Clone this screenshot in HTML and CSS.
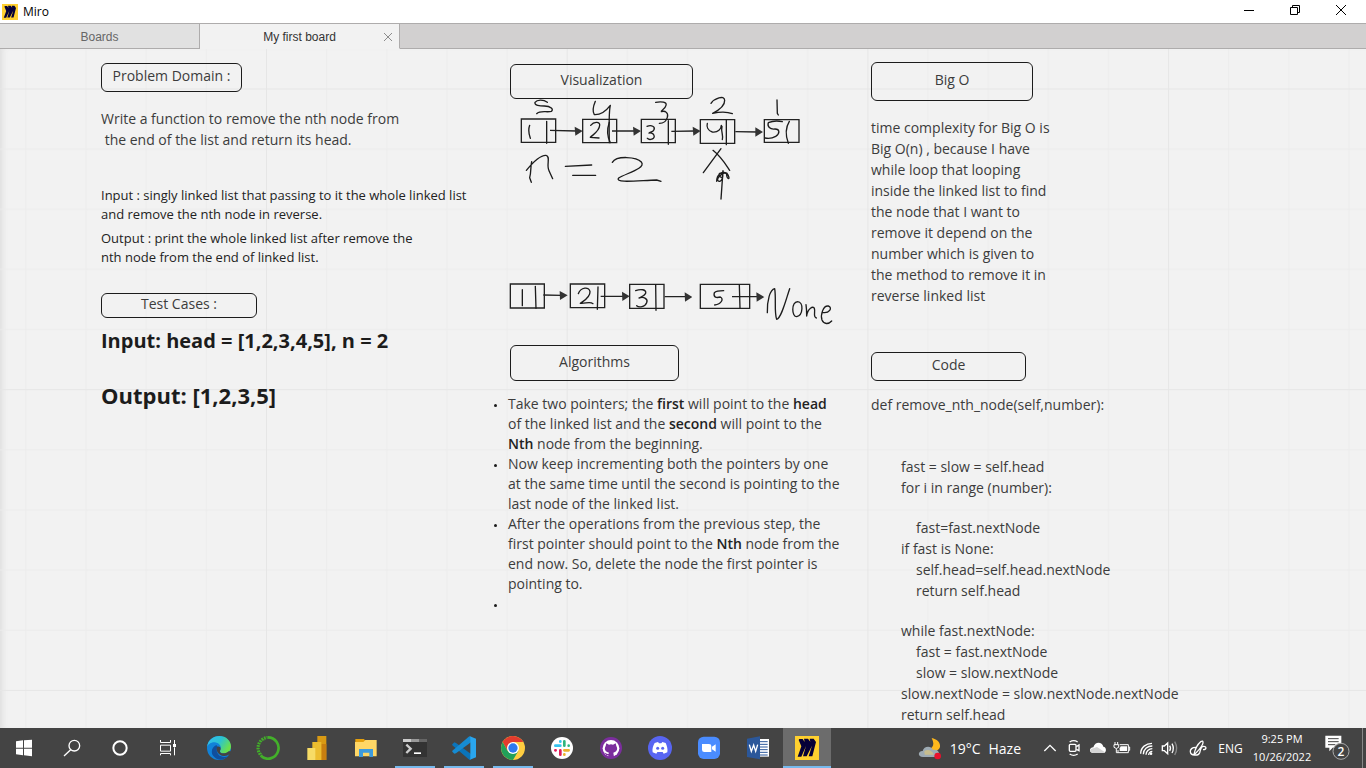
FILE: index.html
```html
<!DOCTYPE html>
<html lang="en">
<head>
<meta charset="utf-8">
<title>Miro</title>
<link rel="stylesheet" href="styles.css">
</head>
<body>
<header class="titlebar">
  <svg class="app-logo" viewBox="345 36 72 72" aria-hidden="true"><use href="#miro-mark"/></svg>
  <span class="app-name">Miro</span>
  <button class="win-btn" aria-label="Minimize"><svg width="10" height="10" viewBox="0 0 10 10"><path d="M0 5.5H10" stroke="#000"/></svg></button>
  <button class="win-btn" aria-label="Restore"><svg width="10" height="10" viewBox="0 0 10 10"><path d="M.5 2.5h7v7h-7zM2.500 2.500v-2h7v7h-2" fill="none" stroke="#000"/></svg></button>
  <button class="win-btn" aria-label="Close window"><svg width="10" height="10" viewBox="0 0 10 10"><path d="M0 0L10 10M10 0L0 10" stroke="#000"/></svg></button>
</header>

<nav class="tabs">
  <button class="tab">Boards</button>
  <div class="tab tab-active">
    <button class="tab-title">My first board</button>
    <button class="tab-close" aria-label="Close tab"><svg width="8" height="8" viewBox="0 0 8 8"><path d="M0 0L8 8M8 0L0 8" stroke="#8c8c8c"/></svg></button>
  </div>
</nav>

<main class="board">
  <svg class="grid" aria-hidden="true">
    <defs>
      <pattern id="cells" width="300.7" height="300.7" patternUnits="userSpaceOnUse" x="266" y="39.500">
        <path d="M60.6 0V301M120.8 0V301M180.900 0V301M241 0V301M0 60.600H301M0 120.800H301M0 180.900H301M0 241H301" stroke="#ececec" fill="none"/>
        <path d="M.5 0V301M0 .5H301" stroke="#e6e6e6" fill="none"/>
      </pattern>
    </defs>
    <rect width="100%" height="100%" fill="url(#cells)"/>
  </svg>

  <div class="columns">
    <section class="col col-problem">
      <h2 class="label label-problem">Problem Domain :</h2>
      <p class="text problem-text">Write a function to remove the nth node from<br>&nbsp;the end of the list and return its head.</p>
      <p class="note note-input">Input : singly linked list that passing to it the whole linked list<br>and remove the nth node in reverse.</p>
      <p class="note">Output : print the whole linked list after remove the<br>nth node from the end of linked list.</p>
      <h2 class="label label-tests">Test Cases :</h2>
      <p class="case case-input">Input: head = [1,2,3,4,5], n = 2</p>
      <p class="case case-output">Output: [1,2,3,5]</p>
    </section>

    <section class="col col-visual">
      <h2 class="label label-visual">Visualization</h2>
      <svg class="sketch" width="368" height="102" viewBox="36 147 1104 306" role="img" aria-label="Linked list of five nodes with n = 2">
        <g fill="none" stroke="#222" stroke-width="4">
          <path d="M124 207H227V277H124ZM308 208H410V278H308ZM484 208H586V278H484ZM661 209H764V280H661ZM853 209H957V277H853Z"/>
          <path d="M210 241L290 243M396 243H466M574 244L644 243M766 245L832 246"/>
        </g>
        <path d="M284 230L308 243L286 257ZM459 230L483 243L461 257ZM638 230L662 243L640 257ZM826 232L849 246L826 260Z" fill="#333"/>
        <g fill="none" stroke="#1c1c1c" stroke-width="4" stroke-linecap="round" stroke-linejoin="round">
          <path d="M202 157C190 148 171 149 165 157C162 166 180 168 193 168C213 168 222 179 214 184C201 188 181 180 170 191"/>
          <path d="M346 154C340 168 336 183 343 194C361 195 378 183 391 166M391 166C386 185 387 210 388 278"/>
          <path d="M527 157C544 154 562 156 558 166C555 179 542 181 544 185C556 181 566 189 562 202C558 217 546 220 538 220"/>
          <path d="M693 160C703 145 733 134 734 151C735 170 710 184 698 190C721 185 744 186 757 191"/>
          <path d="M891 150L892 190L895 195M149 226C144 240 147 254 151 265M200 214V280"/>
          <path d="M332 226C343 213 361 216 359 226C358 244 340 253 331 262L357 264M388 217C381 237 382 261 391 278"/>
          <path d="M501 229C515 224 526 230 522 239C519 246 511 246 507 249C523 247 528 264 516 267C510 270 505 268 502 265M565 212V283"/>
          <path d="M682 220C679 231 684 242 697 246C714 248 724 237 724 226M726 229C722 245 731 256 727 269M739 211V284"/>
          <path d="M907 215C889 211 872 215 865 218C861 229 870 239 885 237C899 237 901 250 887 259C877 265 865 266 855 264M928 214C915 235 918 261 925 280"/>
          <path d="M155 335C151 353 154 366 149 383L154 397M139 361C157 339 181 315 198 316C213 319 198 345 207 362L218 386M256 349L335 345M278 376H347M397 337C409 316 470 320 484 336C500 355 435 371 416 384C404 400 470 392 530 390L543 394"/>
          <path d="M723 296L670 368M699 301C723 320 735 340 749 361M723 447L729 362M710 394C710 372 727 363 740 369C756 391 739 391 740 372C732 363 711 383 713 391C724 403 733 375 725 370C714 366 716 379 724 382"/>
        </g>
      </svg>
      <svg class="sketch sketch-result" width="368" height="50" viewBox="36 30 1104 150" role="img" aria-label="Resulting list 1, 2, 3, 5, None">
        <g fill="none" stroke="#222" stroke-width="4">
          <path d="M91 42H193V114H91ZM271 42H374V113H271ZM449 43H552V115H449ZM661 43H809V115H661Z"/>
          <path d="M190 75L244 76M362 79H433M554 80H620M756 80H835"/>
        </g>
        <path d="M239 63L263 76L240 90ZM426 65L449 79L427 93ZM614 67L637 81L615 95ZM829 67L853 81L830 95Z" fill="#333"/>
        <g fill="none" stroke="#1c1c1c" stroke-width="4" stroke-linecap="round" stroke-linejoin="round">
          <path d="M127 59V107M166 49L168 115M295 71C302 52 328 48 330 65C331 82 312 92 301 100C315 102 329 93 339 101M354 51L352 118"/>
          <path d="M467 62C482 56 500 58 497 70C493 79 481 82 477 84C492 79 505 87 500 98C495 111 477 114 470 107M527 44L528 121"/>
          <path d="M731 62C718 62 708 63 703 68C699 83 710 84 721 81C732 86 725 102 704 105M778 44L780 114"/>
          <path d="M862 128C861 91 870 59 884 56C889 84 882 127 890 148C904 144 916 95 929 56"/>
          <path d="M953 95C933 98 935 140 950 140C970 135 971 96 953 95M978 104C980 118 980 130 980 138C983 114 1000 107 1003 115C1007 127 998 140 1009 144"/>
          <path d="M1027 127C1048 131 1059 113 1045 108C1029 106 1021 135 1026 150C1032 164 1046 163 1055 153"/>
        </g>
      </svg>
      <h2 class="label label-algo">Algorithms</h2>
      <ul class="steps">
        <li>Take two pointers; the <b>first</b> will point to the <b>head</b> of the linked list and the <b>second</b> will point to the <b>Nth</b> node from the beginning.</li>
        <li>Now keep incrementing both the pointers by one at the same time until the second is pointing to the last node of the linked list.</li>
        <li>After the operations from the previous step, the first pointer should point to the <b>Nth</b> node from the end now. So, delete the node the first pointer is pointing to.</li>
        <li></li>
      </ul>
    </section>

    <section class="col col-code">
      <h2 class="label label-bigo">Big O</h2>
      <p class="text bigo-text">time complexity for Big O is<br>Big O(n) , because I have<br>while loop that looping<br>inside the linked list to find<br>the node that I want to<br>remove it depend on the<br>number which is given to<br>the method to remove it in<br>reverse linked list</p>
      <h2 class="label label-code">Code</h2>
      <div class="text code">
        <p class="def">def remove_nth_node(self,number):</p>
        <div class="body">
          <p>fast = slow = self.head<br>for i in range (number):</p>
          <div>
            <p class="inner">fast=fast.nextNode</p>
            <p>if fast is None:</p>
            <p class="inner">self.head=self.head.nextNode<br>return self.head</p>
          </div>
          <div>
            <p>while fast.nextNode:</p>
            <p class="inner">fast = fast.nextNode<br>slow = slow.nextNode</p>
            <p>slow.nextNode = slow.nextNode.nextNode<br>return self.head</p>
          </div>
        </div>
      </div>
    </section>
  </div>
</main>

<footer class="taskbar">
  <div class="system">
    <button class="task" aria-label="Start"><svg width="24" height="24" viewBox="36 36 72 72"><path d="M48 52L69 49V71H48ZM72 49L96 47V71H72ZM48 74H69V94L48 91ZM72 74H96V97L72 94Z" fill="#fff"/></svg></button>
    <button class="task" aria-label="Search"><svg width="24" height="24" viewBox="180 36 72 72" fill="none" stroke="#fff" stroke-width="4"><circle cx="223" cy="65" r="16"/><path d="M212 77L192 96"/></svg></button>
    <button class="task" aria-label="Cortana"><svg width="24" height="24" viewBox="324 36 72 72"><circle cx="360" cy="72" r="20" fill="none" stroke="#fff" stroke-width="6"/></svg></button>
    <button class="task" aria-label="Task View"><svg width="24" height="24" viewBox="468 36 72 72" fill="none" stroke="#fff" stroke-width="3"><path d="M481.500 48V55.500H511.500V48M481.500 63.500H511.500V81.500H481.500ZM481.500 94V88.500H511.500V94M523.500 48V60M523.500 70V94"/><path d="M519 60h9v9h-9z" fill="#fff" stroke="none"/></svg></button>
  </div>
  <div class="apps">
    <button class="task" aria-label="Edge"><svg width="24" height="24" viewBox="621 36 72 72">
      <defs><linearGradient id="eg" x1="0" y1="0" x2="1" y2=".5"><stop offset="0" stop-color="#35bdf1"/><stop offset=".55" stop-color="#2bc3d2"/><stop offset="1" stop-color="#6be04b"/></linearGradient></defs>
      <circle cx="657" cy="72" r="36" fill="#1182d8"/>
      <path d="M621 69C624 48 639 36 658 36C679 36 693 51 693 67C693 81 684 88 672 88C661 88 658 83 661 78C666 69 659 57 645 55C633 54 624 61 621 69Z" fill="url(#eg)"/>
      <path d="M649 63C636 69 631 84 640 96C650 109 670 112 684 96C679 99 671 100 663 97C652 93 646 78 653 68Z" fill="#104f9e"/>
      <path d="M652 68C646 76 653 91 666 95C678 98 686 93 688 91L697 95L697 82L686 82C681 87 674 88 669 88C661 88 658 83 661 78C664 71 659 66 652 68Z" fill="#444"/>
    </svg></button>
    <button class="task" aria-label="Anaconda"><svg width="24" height="24" viewBox="768 36 72 72" fill="none" stroke="#43b02a"><path d="M804 40A32 32 0 1 1 785 98" stroke-width="8"/><path d="M786 97A32 32 0 0 1 803 40" stroke-width="9" stroke-dasharray="5 3"/><path d="M784 90A27 27 0 0 1 798 45" stroke-width="4" stroke-dasharray="3 5"/></svg></button>
    <button class="task" aria-label="Power BI"><svg width="24" height="24" viewBox="914 36 72 72"><path d="M951 36H978V108H951Z" fill="#d99a13"/><path d="M963 60H978V108H963Z" fill="#c87f10"/><path d="M936 54H963V108H936Z" fill="#ecbd2f"/><path d="M921 72H945V108H921Z" fill="#f7dc66"/></svg></button>
    <button class="task" aria-label="File Explorer"><svg width="24" height="24" viewBox="42 36 72 72"><path d="M46 45H72L77 52H108V62H46Z" fill="#e5a00d"/><path d="M45 54H70L76 48H110V97H45Z" fill="#ffd766"/><path d="M57 99V75H99V99H88V86H69V99Z" fill="#3e9bdc"/></svg></button>
    <button class="task task-open" aria-label="Terminal"><svg width="24" height="24" viewBox="189 36 72 72"><path d="M189 45H261V99H189Z" fill="#333"/><path d="M189 45H213V54H189Z" fill="#ccc"/><path d="M213 45H237V54H213Z" fill="#999"/><path d="M237 45H261V54H237Z" fill="#666"/><path d="M199 62L212 74L199 87" fill="none" stroke="#ccc" stroke-width="7"/><path d="M222 85H243V90H222Z" fill="#fff"/></svg></button>
    <button class="task task-open" aria-label="Visual Studio Code"><svg width="24" height="24" viewBox="336 36 72 72"><path d="M337 61L343 55L348 57L394 91V105L388 107L337 64Z" fill="#0b74ba"/><path d="M337 83L343 89L348 88L394 54V40L388 37L337 80Z" fill="#168bd2"/><path d="M388 36L408 44V100L388 108C391 106 391 103 391 98V46C391 41 391 38 388 36Z" fill="#2aa6ee"/></svg></button>
    <button class="task task-open" aria-label="Chrome"><svg width="24" height="24" viewBox="483 36 72 72"><circle cx="519" cy="72" r="36" fill="#ffcd40"/><path d="M488 54A36 36 0 0 1 550 54H519L503 81Z" fill="#e33b2e"/><path d="M488 54A36 36 0 0 0 519 108L535 81L519 88L503 81Z" fill="#22a05a"/><circle cx="519" cy="72" r="18" fill="#fff"/><circle cx="519" cy="72" r="14" fill="#2e79ee"/></svg></button>
    <button class="task" aria-label="Slack"><svg width="24" height="24" viewBox="630 36 72 72"><circle cx="666" cy="72" r="33" fill="#fff"/><g fill="none" stroke-width="8" stroke-linecap="round"><path d="M661 52V53M646 65H661" stroke="#36c5f0"/><path d="M673 52V65M686 65H686" stroke="#2eb67d"/><path d="M673 79H686M673 91V92" stroke="#ecb22e"/><path d="M661 79V92M646 79H647" stroke="#e01e5a"/></g></svg></button>
    <button class="task" aria-label="GitHub Desktop"><svg width="24" height="24" viewBox="777 36 72 72"><circle cx="813" cy="72" r="33" fill="#7b2e9d"/><circle cx="813" cy="73" r="25" fill="#fff"/><path d="M799 58L807 62Q813 60 819 62L827 58L829 66C835 76 829 84 820 86L822 99H805V94C797 95 797 89 793 86C799 85 800 92 806 89L807 86C797 84 791 76 797 66Z" fill="#7b2e9d"/></svg></button>
    <button class="task" aria-label="Discord"><svg width="24" height="24" viewBox="924 36 72 72"><circle cx="960" cy="72" r="36" fill="#5865f2"/><path d="M944 57L954 54L957 58H964L967 54L977 57C981 66 984 76 982 85L971 89L968 84H952L949 89L938 85C936 74 939 66 944 57Z" fill="#fff"/><circle cx="953" cy="73" r="4.500" fill="#5865f2"/><circle cx="968" cy="73" r="4.500" fill="#5865f2"/></svg></button>
    <button class="task" aria-label="Zoom"><svg width="24" height="24" viewBox="51 36 72 72"><rect x="54" y="38" width="66" height="67" rx="17" fill="#4a8cff"/><path d="M66 60H87Q94 60 94 66V84H73Q66 84 66 77ZM96 68L107 61V83L96 76Z" fill="#fff"/></svg></button>
    <button class="task" aria-label="Word"><svg width="24" height="24" viewBox="198 36 72 72"><path d="M237 45H267V98H237Z" fill="#fff"/><path d="M240 53H263M240 61H263M240 69H263M240 77H263M240 85H263M240 93H263" stroke="#2b579a" stroke-width="3"/><path d="M201 44L240 37V106L201 99Z" fill="#2b579a"/><path d="M208 62L214 82L221 63L227 82L233 62" fill="none" stroke="#fff" stroke-width="4"/></svg></button>
    <button class="task task-current" aria-label="Miro"><svg width="24" height="24" viewBox="345 36 72 72"><g id="miro-mark"><path d="M345 36H417V108H345Z" fill="#ffd02f"/><path d="M356 48L358 45H368L374 54L372 44H384L391 53L389 44H401L408 54L397 97H386L396 65L380 97H369L378 66L364 98H353L364 67Z" fill="#050038"/></g></svg></button>
  </div>

  <div class="tray">
    <button class="weather"><svg width="24" height="24" viewBox="57 38 72 72"><path d="M98 44C111 70 96 77 82 78C91 90 119 86 123 71C125 57 113 47 98 44Z" fill="#ffb81c"/><path d="M72 101C54 101 57 82 71 83C74 68 96 65 102 80C119 75 127 94 113 101Z" fill="#9eabb4"/><path d="M76 83Q94 74 105 94H77Z" fill="#c7bd8f"/><circle cx="116" cy="98" r="10" fill="#e8112d"/></svg><span>19°C</span><span>Haze</span></button>
    <button class="tray-btn" aria-label="Show hidden icons"><svg width="24" height="24" viewBox="411 36 72 72"><path d="M430 81L447 64L464 81" fill="none" stroke="#fff" stroke-width="4"/></svg></button>
    <button class="tray-btn" aria-label="Meet Now"><svg width="24" height="24" viewBox="484 36 72 72" fill="none" stroke="#fff" stroke-width="4"><rect x="506" y="61" width="20" height="21" rx="3"/><path d="M527 68L535 63V80L527 76M507 54Q519 46 531 54M507 90Q519 98 531 90"/></svg></button>
    <button class="tray-btn" aria-label="OneDrive"><svg width="24" height="24" viewBox="555 36 72 72"><path d="M577 87C563 87 564 70 577 70C583 50 604 54 607 68C617 69 618 86 607 87Z" fill="#fff"/><path d="M570 75L588 69L612 85Q610 88 606 87H577Q568 86 567 81Z" fill="#d4d4d4"/></svg></button>
    <button class="tray-btn" aria-label="Battery"><svg width="24" height="24" viewBox="627 36 72 72" fill="none" stroke="#fff" stroke-width="3"><path d="M656 62H682V86H651V78M682 69H686V79H682M642 54V62M650 54V62M639 62H653V70Q646 77 639 70ZM646 74V86H651"/><path d="M659 67H678V81H656V73Z" fill="#fff" stroke="none"/></svg></button>
    <button class="tray-btn" aria-label="Wi-Fi"><svg width="24" height="24" viewBox="702 36 72 72" fill="none" stroke="#fff" stroke-width="4"><path d="M722 89C722 70 738 58 756 58M730 91C730 76 742 66 757 66M738 92C738 82 746 74 757 74M746 93C746 87 751 82 757 82"/><circle cx="753" cy="89" r="4" fill="#fff" stroke="none"/></svg></button>
    <button class="tray-btn" aria-label="Volume"><svg width="24" height="24" viewBox="771 36 72 72" fill="none" stroke="#fff" stroke-width="4"><path d="M784 66H790L800 57V89L790 80H784ZM806 65Q811 73 806 81M813 59Q821 73 813 87"/><path d="M821 53Q833 73 821 93" stroke="#888"/></svg></button>
    <button class="tray-btn tray-pen" aria-label="Windows Ink"><svg width="24" height="24" viewBox="855 36 72 72" fill="none" stroke="#fff" stroke-width="4"><path d="M879 91C882 77 889 61 899 53Q907 48 906 57C904 68 893 78 883 89ZM886 70C873 69 867 77 868 83C869 96 892 97 896 86C899 77 899 68 907 67C917 66 918 77 906 77"/></svg></button>
    <button class="lang">ENG</button>
    <button class="clock">9:25 PM<br>10/26/2022</button>
    <button class="notice" aria-label="Notifications"><svg width="26" height="26" viewBox="1274 46 78 78"><path d="M1275 48H1323V84H1297L1287 95V84H1275Z" fill="#fff"/><path d="M1283 57H1315M1283 66H1315M1283 75H1305" stroke="#444" stroke-width="3"/><circle cx="1322" cy="95" r="24" fill="#444" stroke="#aaa" stroke-width="3"/></svg><span class="badge">2</span></button>
  </div>
</footer>
</body>
</html>
```
FILE: styles.css
```css
* { box-sizing: border-box; }

body {
  margin: 0;
  height: 100vh;
  display: flex;
  flex-direction: column;
  overflow: hidden;
  background: #f2f2f2;
  color: #3c3c3c;
  font-family: "Open Sans", "Noto Sans", sans-serif;
}

h2, p, ul { margin: 0; padding: 0; font-weight: 400; }

button {
  margin: 0;
  padding: 0;
  border: 0;
  background: none;
  color: inherit;
  font: inherit;
}

svg { display: block; flex: none; }

/* window chrome */
.titlebar {
  flex: none;
  height: 23px;
  display: flex;
  align-items: center;
  padding: 0 2px;
  background: #fff;
  color: #000;
  font-size: 12px;
}
.app-logo { width: 16px; height: 16px; }
.app-name { flex: 1; padding-left: 5px; }
.win-btn {
  width: 46px;
  height: 23px;
  padding-bottom: 3px;
  display: flex;
  align-items: center;
  justify-content: center;
}

.tabs {
  flex: none;
  height: 26px;
  display: flex;
  background: #d2d0d0;
  border-top: 1px solid #aeacac;
  font: 12px "Liberation Sans", Arial, sans-serif;
}
.tab {
  width: 200px;
  display: flex;
  align-items: center;
  justify-content: center;
  padding-top: 2px;
  background: #e1e1e1;
  border-right: 1px solid #aeacac;
  border-bottom: 1px solid #aeacac;
  color: #666;
}
.tabs::after { content: ""; flex: 1; border-bottom: 1px solid #aeacac; }
.tab-active {
  background: #f2f2f2;
  border-bottom-color: #f2f2f2;
  color: #333;
}
.tab-title { flex: 1; padding-left: 20px; }
.tab-close { padding: 4px 7px 4px 5px; }

/* board */
.board {
  flex: 1;
  min-height: 0;
  position: relative;
  overflow: hidden;
  box-shadow: inset 6px 0 6px -4px #dcdcdc;
}
.grid { position: absolute; top: 0; left: 0; width: 100%; height: 100%; }
.columns {
  position: relative;
  display: grid;
  grid-template-columns: 391fr 379fr 495fr;
  padding-left: 101px;
}
.col { min-width: 0; }

.label {
  display: flex;
  align-items: center;
  justify-content: center;
  border: 1px solid #1c1c1c;
  border-radius: 6px;
  font-size: 14px;
  line-height: 20px;
}
.text { font-size: 14px; line-height: 21px; }

.col-problem { padding-top: 14px; }
.label-problem { width: 141px; height: 29px; padding-bottom: 3px; }
.problem-text { margin-top: 16px; }
.note { margin-top: 5px; font-size: 13px; line-height: 19px; color: #222; }
.note-input { margin-top: 36px; }
.label-tests { width: 156px; height: 25px; margin-top: 26px; padding-bottom: 3px; }
.case { color: #1c1c1c; font-weight: 700; }
.case-input { margin-top: 9px; font-size: 20px; line-height: 28px; }
.case-output { margin-top: 25px; font-size: 22px; line-height: 30px; }

.col-visual { padding-top: 15px; }
.label-visual { width: 183px; height: 35px; margin-left: 18px; padding-bottom: 3px; }
.sketch { overflow: visible; }
.sketch-result { margin-top: 79px; }
.label-algo { width: 169px; height: 36px; margin: 15px 0 0 18px; padding-bottom: 2px; }
.steps {
  width: 350px;
  margin-top: 13px;
  padding-left: 16px;
  list-style: none;
  font-size: 14px;
  line-height: 20px;
}
.steps li { min-height: 20px; position: relative; }
.steps li::before {
  content: "";
  position: absolute;
  top: 10px;
  left: -14px;
  width: 3px;
  height: 3px;
  border-radius: 50%;
  background: #1c1c1c;
}
.steps b { font-weight: 600; color: #222; }

.col-code { padding-top: 13px; }
.label-bigo { width: 162px; height: 39px; padding-bottom: 3px; }
.bigo-text { margin-top: 16px; }
.label-code { width: 155px; height: 29px; margin-top: 46px; padding-bottom: 3px; }
.code { margin-top: 13px; }
.body {
  display: grid;
  gap: 19px;
  margin-top: 41px;
  padding-left: 30px;
}
.inner { padding-left: 15px; }

/* taskbar */
.taskbar {
  flex: none;
  height: 40px;
  display: flex;
  background: #444;
  color: #fff;
}
.system { display: flex; }
.apps { display: flex; gap: 1px; margin-left: 3px; }
.task {
  width: 48px;
  height: 40px;
  display: flex;
  align-items: center;
  justify-content: center;
}
.task-open {
  background: linear-gradient(#76b9ed, #76b9ed) center bottom / 40px 2px no-repeat;
}
.task-current {
  background: linear-gradient(#76b9ed, #76b9ed) center bottom / 48px 2px no-repeat #6c6c6c;
}
.tray {
  display: flex;
  align-items: center;
  margin-left: auto;
  margin-right: 3px;
  padding-right: 11px;
  border-right: 1px solid #888;
}
.weather {
  display: flex;
  align-items: center;
  gap: 8px;
  margin-right: 17px;
  font-size: 14px;
}
.tray-btn { width: 24px; height: 24px; }
.tray-pen { margin-left: 4px; }
.lang { width: 41px; font-size: 12px; }
.clock { width: 62px; font-size: 11px; line-height: 18px; text-align: center; }
.notice { position: relative; margin-left: 12px; }
.badge {
  position: absolute;
  right: 2px;
  bottom: 1px;
  width: 16px;
  font-size: 12px;
  font-weight: 600;
  line-height: 16px;
  text-align: center;
}
```
